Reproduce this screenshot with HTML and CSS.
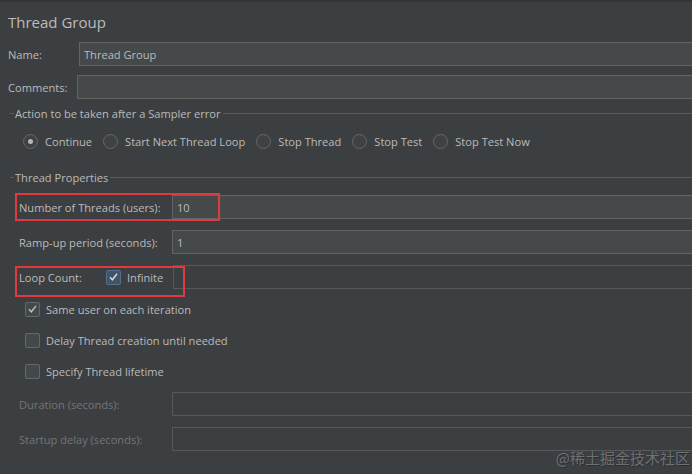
FILE: index.html
```html
<!DOCTYPE html>
<html>
<head>
<meta charset="utf-8">
<link rel="stylesheet" href="styles.css">
</head>
<body>
<div class="page">
  <div class="title">Thread Group</div>

  <div class="row row-name">
    <span class="lbl lbl-name">Name:</span>
    <div class="field">Thread Group</div>
  </div>
  <div class="row row-comments">
    <span class="lbl lbl-comments">Comments:</span>
    <div class="field"></div>
  </div>

  <div class="gtitle gtitle-1"><span>Action to be taken after a Sampler error</span></div>
  <div class="radios">
    <label class="radio"><span class="circle on"></span>Continue</label>
    <label class="radio"><span class="circle"></span>Start Next Thread Loop</label>
    <label class="radio"><span class="circle"></span>Stop Thread</label>
    <label class="radio"><span class="circle"></span>Stop Test</label>
    <label class="radio"><span class="circle"></span>Stop Test Now</label>
  </div>

  <div class="gtitle gtitle-2"><span>Thread Properties</span></div>

  <div class="prow prow-first">
    <span class="plbl">Number of Threads (users):</span>
    <div class="field">10</div>
    <div class="mark mark-1"></div>
  </div>
  <div class="prow">
    <span class="plbl">Ramp-up period (seconds):</span>
    <div class="field">1</div>
  </div>
  <div class="prow">
    <span class="plbl plbl-loop">Loop Count:</span>
    <span class="cb cb-blue"><svg viewBox="0 0 14 14" width="14" height="14"><path d="M3.2 7.2 L5.8 10 L10.8 3.6" fill="none" stroke="#d6d6d6" stroke-width="1.7"/></svg></span>
    <span class="cb-text">Infinite</span>
    <div class="field field-dis"></div>
    <div class="mark mark-2"></div>
  </div>

  <div class="crow crow-first">
    <span class="cb"><svg viewBox="0 0 14 14" width="14" height="14"><path d="M3.2 7.2 L5.8 10 L10.8 3.6" fill="none" stroke="#bbbbbb" stroke-width="1.6"/></svg></span>
    <span>Same user on each iteration</span>
  </div>
  <div class="crow">
    <span class="cb"></span>
    <span>Delay Thread creation until needed</span>
  </div>
  <div class="crow">
    <span class="cb"></span>
    <span>Specify Thread lifetime</span>
  </div>

  <div class="prow prow-dis prow-dur">
    <span class="plbl">Duration (seconds):</span>
    <div class="field field-dis"></div>
  </div>
  <div class="prow prow-dis">
    <span class="plbl">Startup delay (seconds):</span>
    <div class="field field-dis"></div>
  </div>

  <div class="watermark">@稀土掘金技术社区</div>
</div>
</body>
</html>
```
FILE: styles.css
```css
html, body {
  margin: 0;
  padding: 0;
  background: #3c3f41;
  overflow: hidden;
}
.page {
  position: relative;
  width: 692px;
  height: 474px;
  border-top: 2px solid #323436;
  box-sizing: border-box;
  font-family: "Open Sans", "Noto Sans", sans-serif;
  font-size: 11.1px;
  color: #bbbbbb;
}
.title {
  height: 40px;
  display: flex;
  align-items: center;
  padding-left: 8px;
  font-size: 15px;
  color: #bbbbbb;
}
.row {
  display: flex;
  align-items: center;
  height: 24px;
}
.row-comments { margin-top: 9px; }
.lbl { padding-left: 8px; box-sizing: border-box; }
.lbl-name { width: 79px; }
.lbl-comments { width: 77px; }
.field {
  flex: 1;
  height: 24px;
  box-sizing: border-box;
  background: #45494a;
  border: 1px solid #646464;
  margin-right: -4px;
  display: flex;
  align-items: center;
  padding-left: 4px;
  color: #bbbbbb;
}
.field-dis {
  background: #3c3f41;
  border-color: #565859;
}
.gtitle {
  display: flex;
  align-items: center;
  height: 16px;
  padding-left: 10px;
}
.gtitle::before {
  content: "";
  width: 4px;
  border-top: 1px solid #595b5d;
}
.gtitle::after {
  content: "";
  flex: 1;
  border-top: 1px solid #595b5d;
  margin-left: 2px;
}
.gtitle span { padding-left: 1px; }
.gtitle-1 { margin-top: 6px; }
.gtitle-2 { margin-top: 18px; }
.radios {
  display: flex;
  align-items: center;
  height: 20px;
  margin-top: 10px;
  padding-left: 23px;
}
.radio {
  display: flex;
  align-items: center;
  margin-right: 11px;
}
.circle {
  width: 13px;
  height: 13px;
  border: 1px solid #666869;
  border-radius: 50%;
  margin-right: 7px;
  display: flex;
  align-items: center;
  justify-content: center;
  background: #3e4244;
}
.circle.on::after {
  content: "";
  width: 5px;
  height: 5px;
  border-radius: 50%;
  background: #b5b5b5;
}
.prow {
  position: relative;
  display: flex;
  align-items: center;
  height: 24px;
  margin-top: 11px;
  padding-left: 19px;
}
.prow-first { margin-top: 10px; }
.plbl { width: 153px; flex: none; }
.plbl-loop { width: 87px; }
.cb {
  width: 13px;
  height: 13px;
  border: 1px solid #656769;
  border-radius: 2px;
  background: #43494a;
  flex: none;
  display: flex;
  align-items: center;
  justify-content: center;
  margin-right: 6px;
}
.cb svg { display: block; }
.cb-blue {
  background: #40546a;
  border-color: #52708f;
}
.cb-text { width: 46px; flex: none; }
.mark {
  position: absolute;
  border: 2px solid #e0393e;
  box-sizing: border-box;
  pointer-events: none;
}
.mark-1 { left: 15px; top: -2px; width: 205px; height: 28px; }
.mark-2 { left: 15px; top: 1px; width: 170px; height: 31px; }
.crow {
  display: flex;
  align-items: center;
  height: 20px;
  margin-top: 11px;
  padding-left: 25px;
}
.crow-first { margin-top: 10px; }
.prow-dis { color: #737577; }
.watermark {
  position: absolute;
  right: 2px;
  bottom: 6px;
  font-family: "Noto Sans CJK SC", sans-serif;
  font-size: 15px;
  color: #6e7072;
  text-shadow: 1px 1px 0 #2c2e30;
}
```
